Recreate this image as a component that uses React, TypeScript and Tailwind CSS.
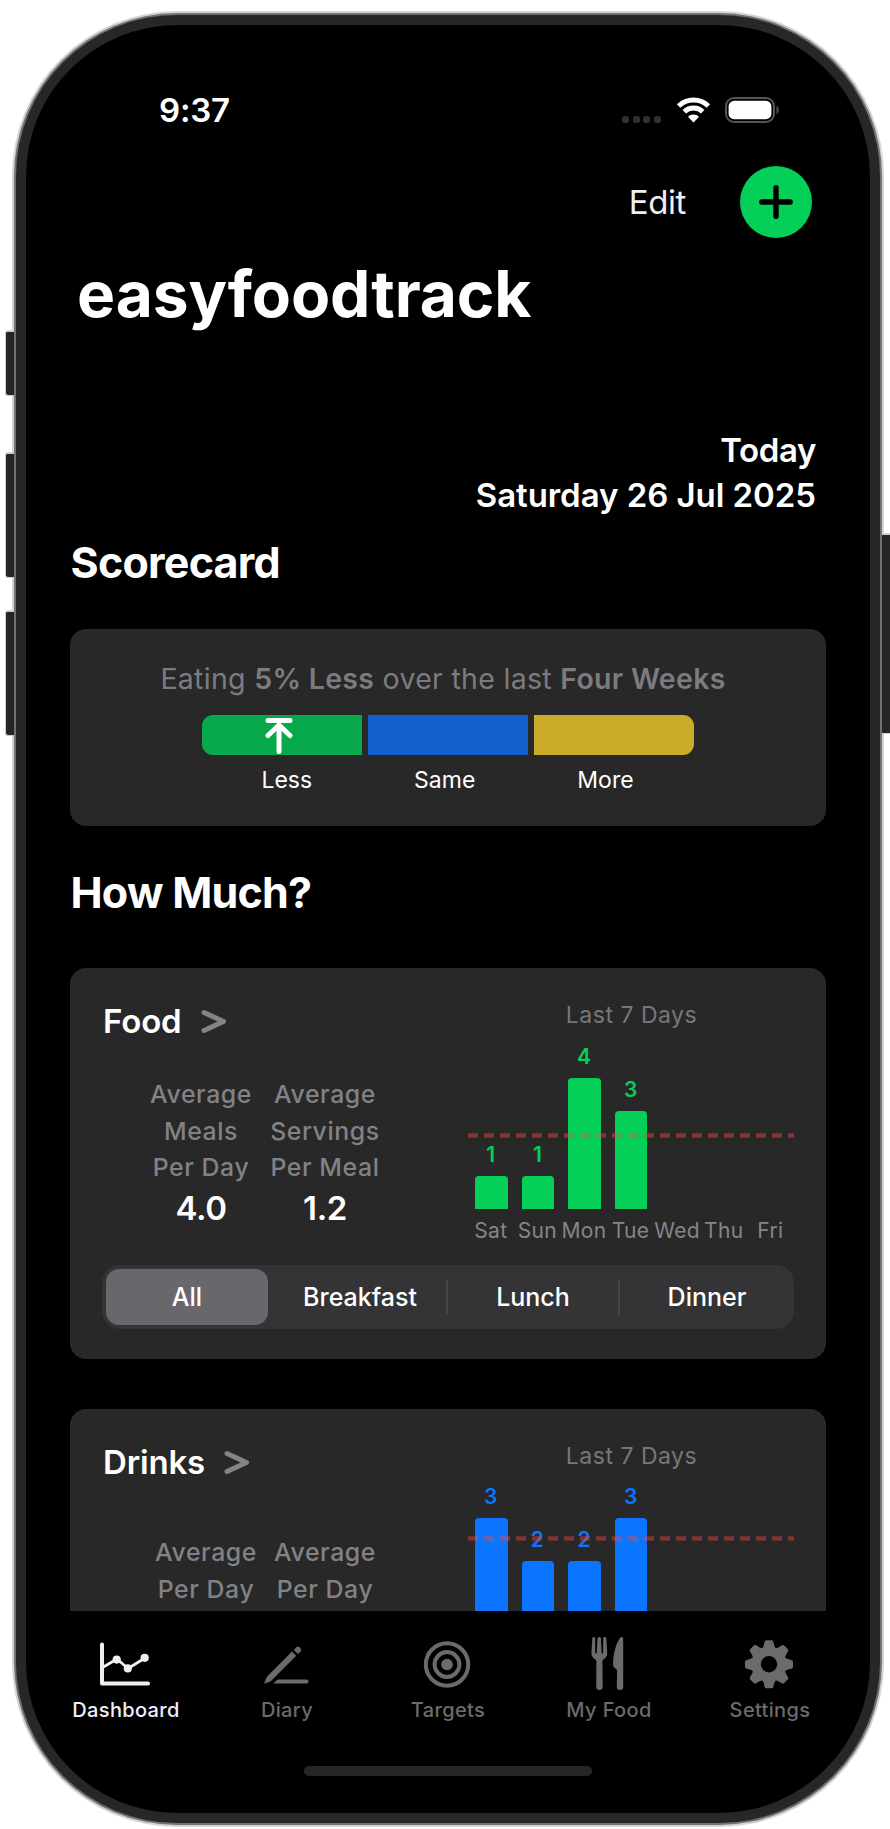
import React from 'react';

const DAYS = ['Sat', 'Sun', 'Mon', 'Tue', 'Wed', 'Thu', 'Fri'];

interface WeekChartProps {
  values: number[];
  unit: number;
  plotHeight: number;
  average: number;
  barClass: string;
  labelClass: string;
  showDays?: boolean;
}

const WeekChart = ({ values, unit, plotHeight, average, barClass, labelClass, showDays }: WeekChartProps) => (
  <div className="relative ml-[-1px] w-[326px]">
    <div className="flex items-end" style={{ height: plotHeight }}>
      {DAYS.map((day, i) => (
        <div key={day} className="flex w-[46.6px] shrink-0 flex-col items-center">
          {values[i] > 0 && (
            <>
              <span className={`mr-[1px] mb-[9px] text-[21px] leading-[24px] font-semibold ${labelClass}`}>{values[i]}</span>
              <div className={`w-[32.6px] rounded-t-[4px] ${barClass}`} style={{ height: values[i] * unit }} />
            </>
          )}
        </div>
      ))}
    </div>
    <svg className="absolute left-0 w-[326px]" height="5" style={{ top: average }}>
      <line x1="0" y1="2.5" x2="326" y2="2.5" stroke="#ff453a" strokeOpacity="0.42" strokeWidth="4.3" strokeDasharray="10 6" />
    </svg>
    {showDays && (
      <div className="mt-[9px] flex">
        {DAYS.map((day) => (
          <span key={day} className="flex w-[46.6px] shrink-0 justify-center pr-[1px] text-[21px] leading-[26px] tracking-[0.3px] text-[#85858a]">
            {day}
          </span>
        ))}
      </div>
    )}
  </div>
);

const CardTitle = ({ children }: { children: React.ReactNode }) => (
  <h3 className="ml-[1px] flex items-center text-[33px] leading-[40px] font-semibold tracking-[-0.15px] text-white">
    {children}
    <svg className="mt-[1px] ml-[19px]" width="26" height="26" viewBox="0 0 26 26" fill="none" stroke="#848488" strokeWidth="5" strokeLinecap="round" strokeLinejoin="round">
      <path d="M3 3.5 L22.5 12.5 L3 21.5" />
    </svg>
  </h3>
);

interface StatProps {
  lines: string[];
  value?: string;
}

const Stat = ({ lines, value }: StatProps) => (
  <div className="flex flex-col items-center whitespace-nowrap">
    {lines.map((line) => (
      <span key={line} className="text-[24.8px] leading-[36.6px] font-medium tracking-[0.6px] text-[#828286]">
        {line}
      </span>
    ))}
    {value && <span className="text-[33px] leading-[45px] font-semibold tracking-[-0.4px] text-white">{value}</span>}
  </div>
);

const SectionTitle = ({ children }: { children: React.ReactNode }) => (
  <h2 className="ml-[0.5px] text-[43px] leading-[52px] font-bold tracking-[-0.75px] text-white">{children}</h2>
);

const StatusBar = () => (
  <div className="flex h-[44px] items-center pr-[89px] pl-[133px]">
    <span className="flex-1 text-[33px] leading-[44px] font-semibold tracking-[-0.2px] text-white">9:37</span>
    <div className="mt-[18px] flex gap-[3.6px]">
      {[0, 1, 2, 3].map((i) => (
        <span key={i} className="size-[7px] rounded-[2.5px] bg-[#2f2f2f]" />
      ))}
    </div>
    <svg className="ml-[15px]" width="35" height="26" viewBox="0 0 35 26" fill="none" stroke="#fff" strokeWidth="5">
      <path d="M2.6 9 A21.5 21.5 0 0 1 32.4 9" />
      <path d="M8.3 14.7 A13.2 13.2 0 0 1 26.7 14.7" />
      <path d="M17.5 25.5 L12 19.8 A8 8 0 0 1 23 19.8 Z" fill="#fff" stroke="none" />
    </svg>
    <svg className="ml-[14px]" width="56" height="26" viewBox="0 0 56 26">
      <rect x="1" y="1" width="48" height="24" rx="8" fill="none" stroke="#555" strokeWidth="2" />
      <rect x="3.6" y="3.8" width="42.8" height="18.4" rx="5.5" fill="#fff" />
      <path d="M51.5 9 C54.5 10 54.5 16 51.5 17 Z" fill="#555" />
    </svg>
  </div>
);

const SEGMENTS = ['All', 'Breakfast', 'Lunch', 'Dinner'];

const SegmentedControl = () => (
  <div className="flex h-[64px] w-[692px] items-center rounded-[18px] bg-[#343436] p-[4px] text-[25px] font-medium text-white">
    {SEGMENTS.map((name, i) => (
      <React.Fragment key={name}>
        {i > 1 && <span className="h-[35px] w-[2px] shrink-0 bg-[#464649]" />}
        <button
          className={
            i === 0
              ? 'h-full w-[162px] rounded-[13px] bg-[#68676c] pt-[2px]'
              : i === 1
                ? 'h-full w-[178px] pt-[2px] pl-[6px]'
                : i === 2
                  ? 'h-full w-[170px] pt-[2px]'
                  : 'h-full flex-1 pt-[2px] pl-[4px]'
          }
        >
          {name}
        </button>
      </React.Fragment>
    ))}
  </div>
);

const DashboardIcon = () => (
  <svg width="50" height="54" viewBox="0 0 50 54" fill="none" stroke="currentColor" strokeLinecap="round" strokeLinejoin="round">
    <path d="M2 7.5 V46.5 H48" strokeWidth="4" />
    <path d="M2.5 30.5 L17 22 L28 31.5 L45 21" strokeWidth="2.8" />
    <g fill="currentColor" stroke="none">
      <circle cx="16.7" cy="22.6" r="4.1" />
      <circle cx="27.8" cy="31.4" r="4.1" />
      <circle cx="44.7" cy="20.8" r="4.1" />
    </g>
  </svg>
);

const DiaryIcon = () => (
  <svg width="46" height="54" viewBox="0 0 46 54" fill="currentColor">
    <path d="M29 14.6 L33.2 18.8 L8.6 43.4 Q7.8 44.3 6 45 L2.6 46.3 Q1 46.8 1.5 45.3 L3.2 41.3 Q3.7 40 4.4 39.3 Z" />
    <path d="M30.8 12.9 L33.4 10.3 Q34.9 8.9 36.5 10.3 L37.6 11.4 Q39 12.9 37.6 14.4 L35 17 Z" />
    <path d="M14.5 42.4 H43.5 A2 2 0 0 1 43.5 46.5 H10.4 Z" />
  </svg>
);

const TargetsIcon = () => (
  <svg width="48" height="54" viewBox="0 0 48 54" fill="none" stroke="currentColor" strokeWidth="4">
    <circle cx="24" cy="27.5" r="21.2" />
    <circle cx="24" cy="27.5" r="12.4" />
    <circle cx="24" cy="27.5" r="5.8" fill="currentColor" stroke="none" />
  </svg>
);

const FoodIcon = () => (
  <svg width="34" height="54" viewBox="0 0 34 54" fill="currentColor">
    <path d="M2.9 0 Q4.1 0 4.1 1.4 L4.3 15.6 Q4.4 16.6 5 16.6 Q5.7 16.6 5.8 15.6 L6.5 1.4 Q6.7 0 8.2 0 Q9.7 0 9.9 1.4 L10.6 15.6 Q10.7 16.6 11.4 16.6 Q12.1 16.6 12.1 15.6 L12.3 1.4 Q12.3 0 13.5 0 Q15.3 0 15.4 1.4 L16.3 16.5 Q16.4 19.8 13.8 21.5 Q11.4 22.9 11.4 24.2 L11.7 50 Q11.6 53 8.5 53 Q5.3 53 5.2 50 L5.4 24.2 Q5.4 22.9 3 21.5 Q0.3 19.8 0.4 16.5 L1.3 1.4 Q1.4 0 2.9 0 Z" />
    <path d="M30.7 0 Q32.2 0 32.2 1.5 V50 Q32.1 53 29 53 Q25.9 53 25.8 50 L26.1 34 Q26.1 32.6 24.5 31.6 Q21.9 30 22 27 Q22.2 12 28.5 1.5 Q29.5 0 30.7 0 Z" />
  </svg>
);

const SettingsIcon = () => (
  <svg width="50" height="54" viewBox="-25 -27.3 50 54" fill="currentColor">
    <path
      fillRule="evenodd"
      d="M17.3 0 A17.3 17.3 0 1 1 -17.3 0 A17.3 17.3 0 1 1 17.3 0 Z M8.2 0 A8.2 8.2 0 1 0 -8.2 0 A8.2 8.2 0 1 0 8.2 0 Z"
    />
    {[0, 45, 90, 135, 180, 225, 270, 315].map((angle) => (
      <path
        key={angle}
        transform={`rotate(${angle})`}
        d="M-8 -15 Q-5.8 -16.5 -5.2 -19 L-4.4 -22.4 Q-4 -24 -2.5 -24 H2.5 Q4 -24 4.4 -22.4 L5.2 -19 Q5.8 -16.5 8 -15 Z"
      />
    ))}
  </svg>
);

const TABS = [
  { name: 'Dashboard', icon: <DashboardIcon />, active: true },
  { name: 'Diary', icon: <DiaryIcon /> },
  { name: 'Targets', icon: <TargetsIcon /> },
  { name: 'My Food', icon: <FoodIcon /> },
  { name: 'Settings', icon: <SettingsIcon /> },
];

const TabBar = () => (
  <nav className="mr-[2px] grid h-[118px] w-[805px] shrink-0 grid-cols-5 self-center pt-[26px]">
    {TABS.map(({ name, icon, active }) => (
      <div key={name} className={`flex flex-col items-center ${active ? 'text-[#f0eff6]' : 'text-[#6b6b6b]'}`}>
        {icon}
        <span className="mt-[7px] ml-[2px] text-[20px] leading-[24px] font-medium tracking-[0.35px]">{name}</span>
      </div>
    ))}
  </nav>
);

const PhoneFrame = ({ children }: { children: React.ReactNode }) => (
  <div className="relative h-[1829px] w-[890px] overflow-hidden bg-white pt-[11px] pl-[12px]">
    <div className="h-[1816px] w-[872px] rounded-[165px] bg-[#d4d4d4] p-[2px]">
      <div className="h-full rounded-[163px] bg-[#727272] p-[2px]">
        <div className="h-full rounded-[161px] bg-[#272727] p-[10px]">
          <div className="flex h-full flex-col overflow-hidden rounded-[151px] bg-black">{children}</div>
        </div>
      </div>
    </div>
    {/* hardware buttons on the sides */}
    <div className="absolute top-[330px] left-[5px] h-[66px] w-[9px] rounded-l-[3px] border border-t-2 border-r-0 border-[#cfd1d0] bg-[#262626]" />
    <div className="absolute top-[452px] left-[5px] h-[126px] w-[9px] rounded-l-[3px] border border-t-2 border-r-0 border-[#cfd1d0] bg-[#262626]" />
    <div className="absolute top-[610px] left-[5px] h-[126px] w-[9px] rounded-l-[3px] border border-t-2 border-r-0 border-[#cfd1d0] bg-[#262626]" />
    <div className="absolute top-[533px] left-[882px] h-[201px] w-[8px] border-t-2 border-b border-[#cfd1d0] bg-[#262626]" />
  </div>
);

export default function App() {
  return (
    <PhoneFrame>
      <div className="flex h-full flex-col font-['Inter',sans-serif]">
        <div className="pt-[63px]">
          <StatusBar />
        </div>

        <div className="mt-[34px] flex items-center justify-end pr-[58px]">
          <span className="mr-[54px] text-[33px] leading-[40px] tracking-[-0.4px] text-[#efeef5]">Edit</span>
          <button className="flex size-[72px] items-center justify-center rounded-full bg-[#04cf58]">
            <svg width="34" height="34" viewBox="0 0 34 34" stroke="#000" strokeWidth="5.4" strokeLinecap="round">
              <path d="M17 2.8 V31.2 M2.8 17 H31.2" />
            </svg>
          </button>
        </div>
        <h1 className="mt-[16px] ml-[51px] text-[64px] leading-[80px] font-bold tracking-[-0.1px] text-white">easyfoodtrack</h1>

        <main className="mt-[1px] ml-[44px] flex h-[1276px] w-[756px] shrink-0 flex-col overflow-hidden">
          <div className="mt-[93px] pr-[10px] text-right text-[33px] leading-[45px] font-semibold tracking-[-0.05px] text-white">
            <p className="tracking-[-0.4px]">Today</p>
            <p>Saturday 26 Jul 2025</p>
          </div>

          <div className="mt-[18px]">
            <SectionTitle>Scorecard</SectionTitle>
          </div>
          <section className="mt-[41px] flex h-[197px] shrink-0 flex-col items-center rounded-[16px] bg-[#282828] pt-[32px]">
            <p className="mr-[10px] text-[28.5px] leading-[36px] tracking-[0.3px] whitespace-nowrap text-[#7c7c80]">
              Eating <b className="font-semibold">5% Less</b> over the last <b className="font-semibold">Four Weeks</b>
            </p>
            <div className="mt-[18px] flex h-[40px] gap-[6px]">
              <div className="flex w-[160px] items-center justify-center rounded-l-[11px] bg-[#08a84c]">
                <svg className="mr-[6px]" width="28" height="38" viewBox="0 0 28 38" fill="none" stroke="#fff" strokeWidth="5" strokeLinecap="round" strokeLinejoin="round">
                  <path d="M3 4.5 H25 M14 9 V35.5 M3 19.5 L14 9 L25 19.5" />
                </svg>
              </div>
              <div className="w-[160px] bg-[#1260cc]" />
              <div className="w-[160px] rounded-r-[11px] bg-[#cdac2b]" />
            </div>
            <div className="mt-[11px] mr-[1px] flex gap-[102px] text-[23px] leading-[28px] text-white">
              <span>Less</span>
              <span>Same</span>
              <span>More</span>
            </div>
          </section>

          <div className="mt-[40px]">
            <SectionTitle>How Much?</SectionTitle>
          </div>
          <section className="mt-[50px] flex h-[391px] shrink-0 flex-col rounded-[16px] bg-[#282828] px-[32px]">
            <div className="flex h-[297px]">
              <div className="w-[367px] pt-[33px]">
                <CardTitle>Food</CardTitle>
                <div className="mt-[35px] flex">
                  <div className="ml-[32px] w-[134px]">
                    <Stat lines={['Average', 'Meals', 'Per Day']} value="4.0" />
                  </div>
                  <div className="-ml-[10px] w-[134px]">
                    <Stat lines={['Average', 'Servings', 'Per Meal']} value="1.2" />
                  </div>
                </div>
              </div>
              <div className="pt-[33px]">
                <p className="text-center text-[23px] leading-[28px] tracking-[0.5px] text-[#77777b]">Last 7 Days</p>
                <WeekChart
                  values={[1, 1, 4, 3, 0, 0, 0]}
                  unit={32.7}
                  plotHeight={180}
                  average={104}
                  barClass="bg-[#04cf58]"
                  labelClass="text-[#04cf58]"
                  showDays
                />
              </div>
            </div>
            <SegmentedControl />
          </section>

          {/* continues below the tab bar */}
          <section className="mt-[50px] flex min-h-0 flex-1 overflow-hidden rounded-t-[16px] bg-[#282828] px-[32px]">
            <div className="w-[367px] pt-[33px]">
              <CardTitle>Drinks</CardTitle>
              <div className="mt-[52px] flex">
                <div className="ml-[37px] w-[134px]">
                  <Stat lines={['Average', 'Per Day']} />
                </div>
                <div className="-ml-[15px] w-[134px]">
                  <Stat lines={['Average', 'Per Day']} />
                </div>
              </div>
            </div>
            <div className="pt-[33px]">
              <p className="text-center text-[23px] leading-[28px] tracking-[0.5px] text-[#77777b]">Last 7 Days</p>
              <WeekChart
                values={[3, 2, 2, 3, 0, 0, 0]}
                unit={43.6}
                plotHeight={178.5}
                average={66}
                barClass="bg-[#0b75ff]"
                labelClass="text-[#0b75ff]"
              />
            </div>
          </section>
        </main>

        <TabBar />
        <div className="mt-[37px] h-[10px] w-[288px] shrink-0 self-center rounded-full bg-[#272727]" />
      </div>
    </PhoneFrame>
  );
}
